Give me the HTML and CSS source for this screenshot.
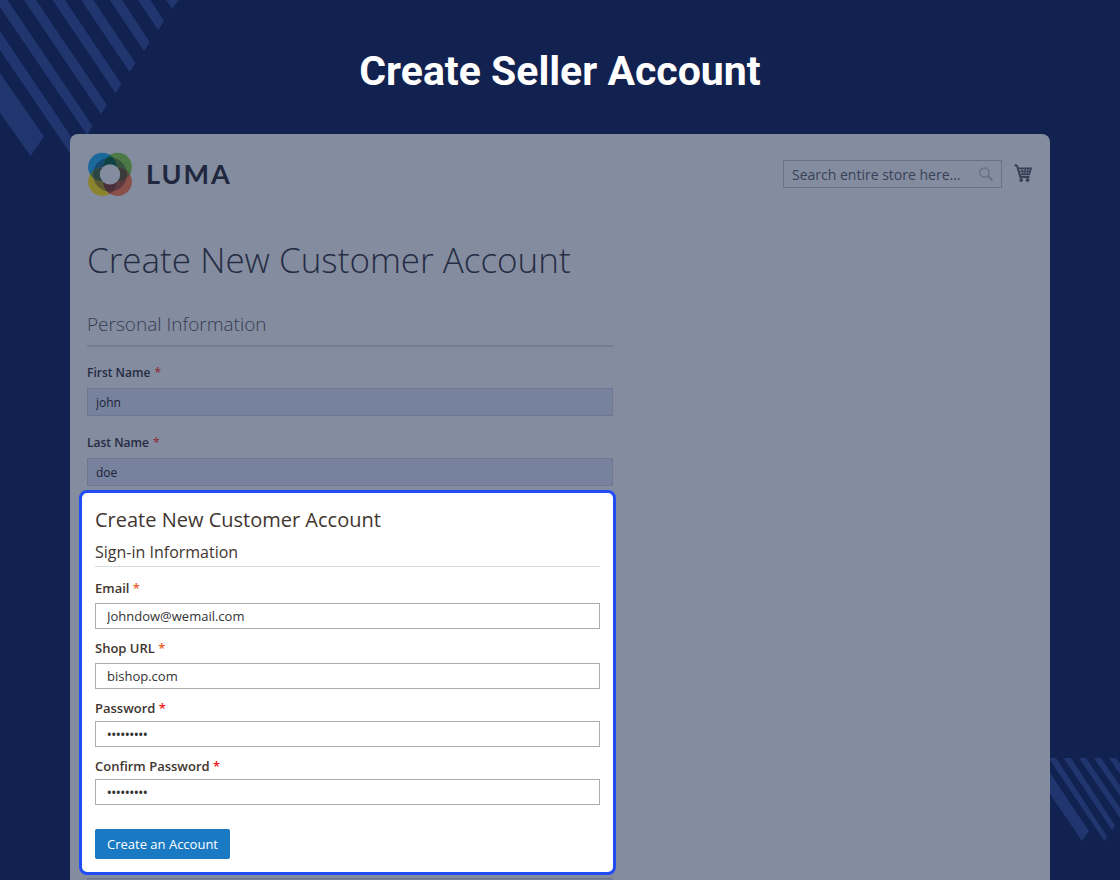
FILE: index.html
```html
<!DOCTYPE html>
<html lang="en">
<head>
<meta charset="utf-8">
<meta name="viewport" content="width=device-width, initial-scale=1">
<title>Create Seller Account</title>
<link rel="stylesheet" href="styles.css">
</head>
<body>
<svg class="stripes stripes-top" width="180" height="160" viewBox="0 0 180 160" aria-hidden="true">
  <path d="M0 73L44 136.500L30.500 156L0 113zM0 31L78 147L72 156L0 50zM-5 0H7.500L92.600 126L87 135zM24 0H36L107 105L101 114zM52.500 0H65L121.300 84L115.500 93zM81 0H93.500L135.500 63L129.700 72zM109.700 0H122L149.700 42L144 51zM138 0H150.500L164 21L158.200 30zM166 0H178.500L178 1L172.300 9z"/>
</svg>
<svg class="stripes stripes-bottom" width="80" height="90" viewBox="0 0 80 90" aria-hidden="true">
  <path d="M10 15L49 73L42 83L10 36zM10 0H16L67.300 79L64.300 83L10 2zM23.500 0H31L75 67.500L72 72zM39 0H46L80 50V60zM54 0H61L80 28V38zM69 0H76L80 6V16z"/>
</svg>

<main class="page">
  <h1 class="page-title">Create Seller Account</h1>
  <section class="store">
    <header class="store-header">
      <a class="logo" href="#" aria-label="Luma">
        <svg class="logo-mark" width="44" height="44" viewBox="0 0 44 44" aria-hidden="true">
          <circle cx="14.300" cy="15" r="14.200" fill="#1b689d"/>
          <circle cx="29.700" cy="15" r="14.200" fill="#4c7946"/>
          <circle cx="14.300" cy="29.800" r="14.200" fill="#8c832f"/>
          <circle cx="29.700" cy="29.800" r="14.200" fill="#8a4f48"/>
          <path d="M22 3A14.200 14.200 0 0 1 22 27A14.200 14.200 0 0 1 22 3z" fill="#085a4c"/>
          <path d="M22 18A14.200 14.200 0 0 1 22 42A14.200 14.200 0 0 1 22 18z" fill="#6b3a3c"/>
          <path d="M2 22.400A14.200 14.200 0 0 1 26 22.400A14.200 14.200 0 0 1 2 22.400z" fill="#38604a"/>
          <path d="M18 22.400A14.200 14.200 0 0 1 42 22.400A14.200 14.200 0 0 1 18 22.400z" fill="#534d3d"/>
          <circle cx="22" cy="22.400" r="13.500" fill="none" stroke="#182238" stroke-opacity=".42" stroke-width="7"/>
          <circle cx="22" cy="22.400" r="10.200" fill="#848c9f"/>
        </svg>
        <span class="logo-name">LUMA</span>
      </a>
      <div class="header-tools">
        <form class="search">
          <input class="search-input" type="text" placeholder="Search entire store here..." aria-label="Search">
          <button class="icon-button" type="button" aria-label="Search">
            <svg width="14" height="14" viewBox="0 0 14 14" fill="none" stroke="#687188" stroke-width="1.500"><circle cx="5.500" cy="5.500" r="4.600"/><path d="M9 9l4.300 4.300" stroke-width="2"/></svg>
          </button>
        </form>
        <button class="icon-button" type="button" aria-label="Cart">
          <svg width="18" height="20" viewBox="0 0 18 20" fill="none" stroke="#394158"><path d="M.6 1L3 1.800L6.300 13H15.500" stroke-width="2"/><path d="M4 4.400H17L15.200 10.400H5.800" stroke-width="1.800"/><path d="M4.600 7.400H16M8 4.400l.8 6M11 4.400v6M14 4.400l-.6 6" stroke-width="1.400"/><circle cx="7.200" cy="16" r="1.900" fill="#394158" stroke="none"/><circle cx="13.600" cy="16" r="1.900" fill="#394158" stroke="none"/></svg>
        </button>
      </div>
    </header>

    <form class="account">
      <h2 class="account-title">Create New Customer Account</h2>
      <h3 class="section-title">Personal Information</h3>
      <div class="back-field">
        <label class="back-label" for="first">First Name <span class="star-dim">*</span></label>
        <input class="back-input" id="first" type="text" value="john">
      </div>
      <div class="back-field">
        <label class="back-label" for="last">Last Name <span class="star-dim">*</span></label>
        <input class="back-input" id="last" type="text" value="doe">
      </div>

      <div class="card">
        <h2 class="card-title">Create New Customer Account</h2>
        <h3 class="card-subtitle">Sign-in Information</h3>
        <div class="field">
          <label class="label" for="email">Email <span class="star">*</span></label>
          <input class="input" id="email" type="email" value="Johndow@wemail.com">
        </div>
        <div class="field">
          <label class="label" for="shop">Shop URL <span class="star">*</span></label>
          <input class="input" id="shop" type="text" value="bishop.com">
        </div>
        <div class="field field-tight">
          <label class="label" for="pass">Password <span class="star star-red">*</span></label>
          <input class="input input-secret" id="pass" type="password" value="customer1">
        </div>
        <div class="field field-tight">
          <label class="label" for="confirm">Confirm Password <span class="star star-red">*</span></label>
          <input class="input input-secret" id="confirm" type="password" value="customer1">
        </div>
        <button class="submit" type="button">Create an Account</button>
      </div>
      <input class="back-input" type="text" aria-label="Additional information">
    </form>
  </section>
</main>
</body>
</html>
```
FILE: styles.css
```css
* { box-sizing: border-box; }

body {
  margin: 0;
  background: #112150;
  font-family: "Open Sans", sans-serif;
  color: #41362f;
}

h1, h2, h3 { margin: 0; }
input, button { font-family: inherit; }

.stripes { position: absolute; fill: #21366f; }
.stripes-top { top: 0; left: 0; }
.stripes-bottom { right: 0; bottom: 32px; }

.page {
  position: relative;
  display: flex;
  flex-direction: column;
  height: 100vh;
  overflow: hidden;
  padding: 46px 70px 0;
}

.page-title {
  margin-bottom: 38px;
  color: #fff;
  font: 700 41px/50px Roboto, sans-serif;
  text-align: center;
}

.store {
  flex: 1 0 auto;
  padding: 18px 18px 18px 17px;
  border-radius: 8px 8px 0 0;
  background: #848c9f;
}

.store-header {
  display: flex;
  align-items: center;
  justify-content: space-between;
  padding-left: 1px;
}

.logo {
  display: flex;
  align-items: center;
  gap: 14px;
  color: #20273e;
  text-decoration: none;
}

.logo-name { font: 700 27px/44px Lato, sans-serif; letter-spacing: 2px; }

.header-tools { display: flex; align-items: center; gap: 12px; }

.search {
  display: flex;
  align-items: center;
  width: 219px;
  height: 28px;
  padding: 0 8px;
  border: 1px solid #687188;
}

.search-input {
  flex: 1;
  min-width: 0;
  padding: 0;
  border: 0;
  background: transparent;
  font-size: 14px;
  font-weight: 500;
}
.search-input::placeholder { color: #394158; opacity: 1; }

.icon-button {
  display: flex;
  padding: 0;
  border: 0;
  background: transparent;
}

.account { max-width: 526px; margin-top: 38px; }

.account-title {
  color: #252c44;
  font-size: 35px;
  font-weight: 300;
  line-height: 52px;
}

.section-title {
  margin: 25px 0 16px;
  padding-bottom: 8px;
  border-bottom: 2px solid #737c91;
  color: #363d53;
  font-size: 19px;
  font-weight: 300;
  line-height: 26px;
}

.back-field { margin-bottom: 16px; }

.back-label {
  display: block;
  margin-bottom: 5px;
  color: #242b43;
  font-size: 12px;
  font-weight: 600;
  line-height: 20px;
}
.back-field + .back-field .back-label { padding-top: 1px; }

.star-dim { margin-left: 1px; color: #8c3042; }

.back-input {
  display: block;
  width: 100%;
  height: 28px;
  padding: 0 8px;
  border: 1px solid #6e778d;
  background: #77829f;
  color: #1d2337;
  font-size: 12px;
  font-weight: 500;
}

.card {
  margin: -12px -3px 3px -8px;
  padding: 12px 13px 13px;
  border: 3px solid #1f4cf5;
  border-radius: 8px;
  background: #fff;
}

.card-title { font-size: 20px; font-weight: 400; line-height: 30px; }

.card-subtitle {
  margin-bottom: 11px;
  padding: 6px 0 3px;
  border-bottom: 1px solid #d6dcde;
  font-size: 16px;
  font-weight: 400;
  line-height: 22px;
}

.field { margin-bottom: 9px; }

.label {
  display: block;
  margin-bottom: 5px;
  font-size: 13px;
  font-weight: 600;
  line-height: 20px;
}

.field-tight .label { margin-bottom: 3px; }

.star { color: #eb5d1e; }
.star-red { color: #f01616; }

.input {
  display: block;
  width: 100%;
  height: 26px;
  padding: 0 11px;
  border: 1px solid #adadad;
  background: #fff;
  color: #333;
  font-size: 13px;
}

.input-secret { font-size: 12px; font-weight: 600; }

.submit {
  height: 30px;
  margin-top: 15px;
  padding: 0 12px;
  border: 0;
  border-radius: 2px;
  background: #1979c3;
  color: #fff;
  font-size: 13px;
}
```
